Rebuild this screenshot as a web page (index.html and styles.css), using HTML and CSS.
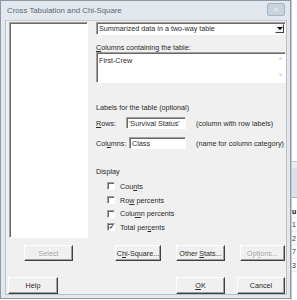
FILE: index.html
```html
<html>
<head>
	<meta charset="utf-8">
	<title>Cross Tabulation and Chi-Square</title>
	<link rel="stylesheet" href="styles.css">
</head>
<body>
	<div class="screen">
		<div class="dialog">
			<div class="titlebar">
				<span class="title">Cross Tabulation and Chi-Square</span>
				<span class="close">&#x2715;</span>
			</div>
			<div class="client">
				<div class="main">
					<div class="left">
						<div class="listbox"></div>
					</div>
					<div class="right">
						<div class="combo">
							<span class="combo-text">Summarized data in a two-way table</span>
							<span class="combo-btn"><span class="tri"></span></span>
						</div>
						<div class="label lbl-cols"><u>C</u>olumns containing the table:</div>
						<div class="memo">
							<span class="memo-text">First-Crew</span>
							<span class="memo-scroll"><span class="up">&#x2c4;</span><span class="dn">&#x2c5;</span></span>
						</div>
						<div class="label lbl-labels">Labels for the table (optional)</div>
						<div class="field-row row-rows">
							<span class="field-name"><u>R</u>ows:</span>
							<span class="edit edit-rows">'Survival Status'</span>
							<span class="hint">(column with row labels)</span>
						</div>
						<div class="field-row row-cols">
							<span class="field-name name-cols">Col<u>u</u>mns:</span>
							<span class="edit edit-cols">Class</span>
							<span class="hint">(name for column category)</span>
						</div>
						<div class="label lbl-display">Display</div>
						<div class="checks">
							<div class="check"><span class="box"></span><span>Cou<u>n</u>ts</span></div>
							<div class="check"><span class="box"></span><span>Ro<u>w</u> percents</span></div>
							<div class="check"><span class="box"></span><span>Colu<u>m</u>n percents</span></div>
							<div class="check"><span class="box on">&#x2714;</span><span>Total per<u>c</u>ents</span></div>
						</div>
					</div>
				</div>
				<div class="btn-row row1">
					<span class="btn disabled b-select"><span>Select</span></span>
					<span class="btn b-chi"><span>C<u>h</u>i-Square...</span></span>
					<span class="btn b-other"><span>Other <u>S</u>tats...</span></span>
					<span class="btn disabled b-options"><span>Opt<u>i</u>ons...</span></span>
				</div>
				<div class="btn-row row2">
					<span class="btn b-help"><span>Help</span></span>
					<span class="btn b-ok"><span><u>O</u>K</span></span>
					<span class="btn b-cancel"><span>Cancel</span></span>
				</div>
			</div>
		</div>
		<div class="behind">
			<div class="bh-top"></div>
			<div class="bh-band"></div>
			<div class="bh-gap"></div>
			<div class="bh-cell bold">u</div>
			<div class="bh-cell">1</div>
			<div class="bh-cell">2</div>
			<div class="bh-cell">7</div>
			<div class="bh-cell">3</div>
		</div>
	</div>
</body>
</html>
```

FILE: styles.css
```css
body{
	margin:0;
	background:#ffffff;
	font-family:"Liberation Sans", Arial, sans-serif;
	font-size:7.2px;
	color:#2a2a2a;
}
u{text-decoration:underline;}
.screen{
	display:flex;
	width:297px;
	height:300px;
}
/* dialog frame */
.dialog{
	width:289px;
	height:297px;
	border:1px solid #8e99a5;
	background:#e2e8ee;
	display:flex;
	flex-direction:column;
	flex:none;
}
.titlebar{
	height:20px;
	display:flex;
	align-items:center;
	justify-content:space-between;
	padding:0 5px 0 6px;
}
.title{
	font-size:7.8px;
	color:#5b6470;
}
.close{
	width:16px;
	height:11px;
	margin-top:-3px;
	background:#c9d3dd;
	border:1px solid #aab5c1;
	border-radius:2px;
	color:#eef2f6;
	font-size:7px;
	line-height:11px;
	text-align:center;
}
.client{
	flex:1;
	margin:0 3px 3px 4px;
	background:#f0f0f0;
	border:1px solid #b7c0c9;
	border-top-color:#c5ccd3;
}
.main{
	display:flex;
	height:217px;
}
.left{
	width:90px;
	padding:1px 0 0 3px;
	box-sizing:border-box;
}
.listbox{
	width:79px;
	height:216px;
	box-sizing:border-box;
	background:#fff;
	border:1px solid;
	border-color:#a0a0a0 #ffffff #ffffff #a0a0a0;
	box-shadow:inset 1px 1px 0 #696969;
}
.right{
	width:190px;
	padding-top:1px;
}
.combo{
	height:13px;
	box-sizing:border-box;
	background:#fff;
	border:1px solid;
	border-color:#a0a0a0 #fff #fff #a0a0a0;
	box-shadow:inset 1px 1px 0 #696969;
	display:flex;
	align-items:center;
	justify-content:space-between;
	padding-left:2px;
}
.combo-btn{
	width:9px;
	height:9px;
	margin-right:1px;
	background:#f0f0f0;
	border:1px solid;
	border-color:#fff #404040 #404040 #fff;
	box-sizing:border-box;
	display:flex;
	align-items:center;
	justify-content:center;
}
.tri{
	width:0;
	height:0;
	border-left:3px solid transparent;
	border-right:3px solid transparent;
	border-top:3px solid #000;
}
.label{
	height:10px;
	line-height:10px;
}
.lbl-cols{margin-top:8px;}
.memo{
	margin-top:-1px;
	height:31px;
	box-sizing:border-box;
	background:#fff;
	border:1px solid;
	border-color:#a0a0a0 #fff #fff #a0a0a0;
	box-shadow:inset 1px 1px 0 #696969;
	display:flex;
	justify-content:space-between;
}
.memo-text{
	padding:3px 0 0 2px;
}
.memo-scroll{
	width:9px;
	display:flex;
	flex-direction:column;
	justify-content:space-between;
	align-items:center;
	color:#a8a8a8;
	font-size:6px;
	line-height:9px;
	padding:2px 0;
}
.lbl-labels{margin-top:20px;}
.field-row{
	display:flex;
	align-items:center;
	height:12px;
}
.row-rows{margin-top:4px;}
.row-cols{margin-top:8px;}
.field-name{width:30px;}
.name-cols{width:33px;}
.edit{
	height:12px;
	box-sizing:border-box;
	background:#fff;
	border:1px solid;
	border-color:#a0a0a0 #fff #fff #a0a0a0;
	box-shadow:inset 1px 1px 0 #696969;
	padding:1px 0 0 2px;
	line-height:9px;
}
.edit-rows{width:60px;}
.edit-cols{width:57px;}
.hint{margin-left:10px;}
.lbl-display{margin-top:18px;}
.checks{
	padding-left:11px;
	margin-top:2px;
}
.check{
	height:14px;
	display:flex;
	align-items:center;
}
.check:nth-child(3){height:13px;}
.box{
	width:8px;
	height:8px;
	box-sizing:border-box;
	background:#fff;
	border:1px solid;
	border-color:#a0a0a0 #fff #fff #a0a0a0;
	box-shadow:inset 1px 1px 0 #696969;
	margin-right:5px;
	font-size:6px;
	line-height:7px;
	text-align:center;
	overflow:hidden;
}
/* buttons */
.btn-row{
	display:flex;
	align-items:center;
}
.row1{
	margin-top:7px;
	height:16px;
}
.row2{
	margin-top:16px;
	height:17px;
}
.btn{
	height:100%;
	box-sizing:border-box;
	background:#f0f0f0;
	border:1px solid;
	border-color:#ffffff #404040 #404040 #ffffff;
	box-shadow:inset -1px -1px 0 #a0a0a0;
	display:flex;
	align-items:center;
	justify-content:center;
}
.disabled{
	color:#a0a0a0;
	text-shadow:1px 1px 0 #fff;
}
.b-select{margin-left:18px;width:49px;}
.b-chi{margin-left:42px;width:46px;}
.b-other{margin-left:15px;width:49px;}
.b-options{margin-left:15px;width:45px;}
.b-help{margin-left:2px;width:50px;}
.b-ok{margin-left:118px;width:49px;}
.b-cancel{margin-left:12px;width:48px;}
/* window behind the dialog */
.behind{
	flex:1;
	background:#fff;
	border-left:1px solid #c8c8c8;
	overflow:hidden;
	white-space:nowrap;
	font-size:7px;
}
.bh-top{
	height:162px;
	border-bottom:1px solid #c3cad1;
	box-sizing:border-box;
}
.bh-band{
	height:36px;
	background:#d9e1ea;
	border-top:6px solid #e8edf2;
	border-bottom:1px solid #b0b8c0;
	box-sizing:border-box;
}
.bh-gap{height:7px;}
.bh-cell{
	height:13.4px;
	line-height:13.4px;
	color:#333;
	border-bottom:1px solid #eaeaea;
	box-sizing:border-box;
}
.bold{font-weight:bold;color:#000;}
```
